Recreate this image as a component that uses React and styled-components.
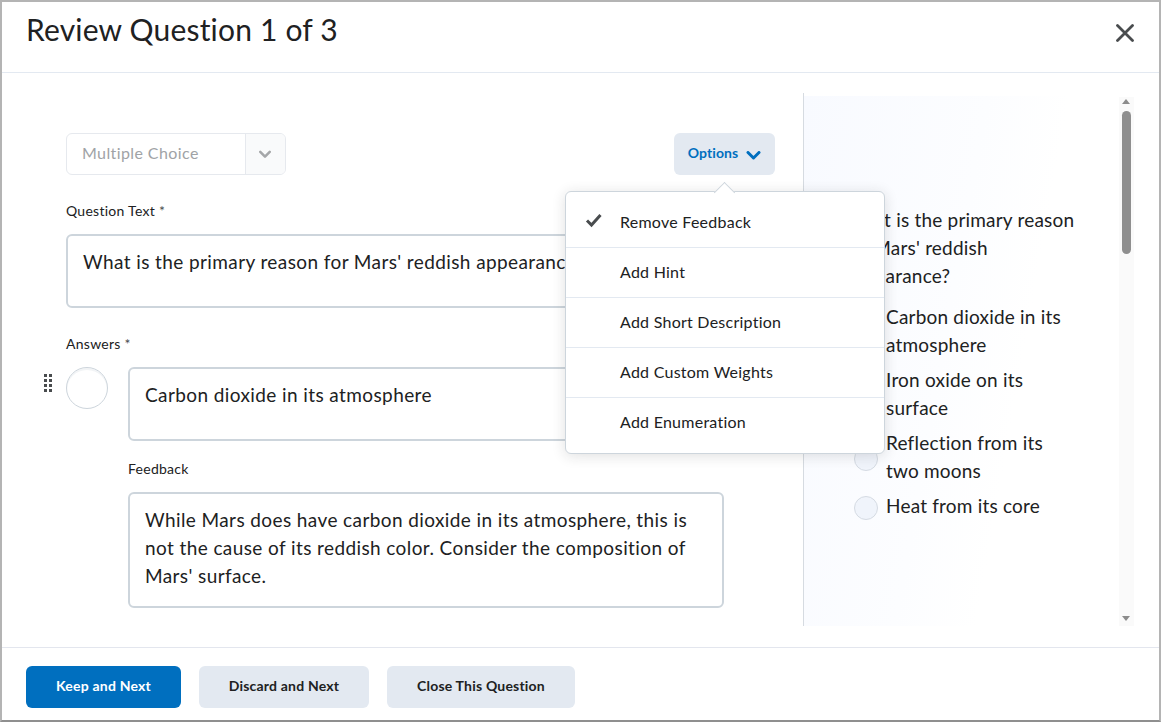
import React from 'react'
import styled, { createGlobalStyle } from 'styled-components'

const GlobalStyle = createGlobalStyle`
  html, body { margin: 0; padding: 0; height: 100%; }
  body { font-family: Lato, "Liberation Sans", sans-serif; color: #202122; background: #fff; }
  * { box-sizing: border-box; }
`

const Dialog = styled.div`
  width: 1161px;
  height: 722px;
  display: flex;
  flex-direction: column;
  background: #fff;
  border: 2px solid #b4b4b4;
  border-bottom-color: #8f8f8f;
  overflow: hidden;
`

const Header = styled.header`
  height: 71px;
  flex: none;
  display: flex;
  align-items: flex-start;
  justify-content: space-between;
  padding: 7px 24px 0;
  border-bottom: 1px solid #e3e9f1;
`

const Title = styled.h1`
  margin: 0;
  font-size: 30px;
  line-height: 40px;
  font-weight: 400;
  letter-spacing: 0.18px;
`

const CloseButton = styled.button`
  width: 18px;
  height: 18px;
  margin: 15px 1px 0 0;
  padding: 0;
  border: 0;
  background: none;
  color: #494c4e;
  display: flex;
`

const Body = styled.main`
  flex: 1;
  min-height: 0;
  display: flex;
  overflow: hidden;
`

const Form = styled.section`
  width: 801px;
  flex: none;
  padding: 60px 0 0 42px;
`

const TopRow = styled.div`
  width: 709px;
  margin-left: 22px;
  margin-bottom: 26px;
  display: flex;
  justify-content: space-between;
`

const SelectBox = styled.div`
  width: 220px;
  height: 42px;
  display: flex;
  border: 1px solid #e6e9ee;
  border-radius: 6px;
  overflow: hidden;
`

const SelectText = styled.div`
  flex: 1;
  padding-left: 15px;
  font-size: 16px;
  line-height: 38px;
  letter-spacing: 0.4px;
  color: #a0a3a6;
`

const SelectArrow = styled.div`
  width: 40px;
  display: flex;
  align-items: center;
  justify-content: center;
  padding-right: 2px;
  background: #f9fafb;
  border-left: 1px solid #e6e9ee;
  color: #a5a7a9;
`

const OptionsButton = styled.button`
  width: 101px;
  height: 42px;
  display: flex;
  align-items: center;
  justify-content: center;
  gap: 8px;
  padding: 0 0 3px;
  border: 0;
  border-radius: 6px;
  background: #e3e9f1;
  color: #006fbf;
  font: 700 14px Lato, sans-serif;
  letter-spacing: 0.1px;

  svg { margin-top: 5px; }
`

const OptionsWrap = styled.div`
  position: relative;
`

const Menu = styled.div`
  position: absolute;
  z-index: 5;
  top: 58px;
  left: -109px;
  width: 320px;
  padding-bottom: 6px;
  background: #fff;
  border: 1px solid #cdd5dc;
  border-radius: 6px;
  box-shadow: 0 2px 14px rgba(32, 33, 34, 0.14);

  &::before {
    content: '';
    position: absolute;
    top: -7px;
    left: 151px;
    width: 14px;
    height: 14px;
    background: #fff;
    border-top: 1px solid #cdd5dc;
    border-left: 1px solid #cdd5dc;
    transform: rotate(45deg);
  }
`

const MenuItem = styled.div`
  position: relative;
  height: 50px;
  display: flex;
  align-items: center;
  padding: 0 0 2px 54px;
  font-size: 16px;
  letter-spacing: 0.25px;
  border-top: ${(p) => (p.$first ? '0' : '1px solid #e3e9f1')};
  margin-top: ${(p) => (p.$first ? '5px' : '0')};
`

const Check = styled.span`
  position: absolute;
  left: 19px;
  top: 15px;
  display: flex;
  color: #494c4e;
`

const Label = styled.div`
  height: 20px;
  margin-left: ${(p) => p.$indent || 22}px;
  margin-bottom: 13px;
  font-size: 14px;
  line-height: 20px;
  letter-spacing: 0.27px;
`

const Star = styled.span`
  color: #494c4e;
`

const TextBox = styled.div`
  width: ${(p) => p.$width || 596}px;
  height: ${(p) => p.$height || 74}px;
  margin-left: ${(p) => p.$indent || 0}px;
  padding: 12px 15px;
  border: 2px solid #cdd5dc;
  border-radius: 6px;
  font-size: 19px;
  line-height: 28px;
  letter-spacing: 0.4px;
  flex: none;
`

const QuestionBox = styled(TextBox)`
  margin-bottom: 26px;
  white-space: nowrap;
  overflow: hidden;
`

const AnswerRow = styled.div`
  display: grid;
  grid-template-columns: 8px 42px 596px;
  column-gap: 14px;
  margin-bottom: 18px;
`

const Handle = styled.svg`
  margin-top: 7px;
  color: #494c4e;
`

const Radio = styled.span`
  width: 42px;
  height: 42px;
  border-radius: 50%;
  border: 1px solid #cdd5dc;
  background: #fff;
  box-shadow: inset 0 2px 0 rgba(205, 213, 220, 0.25);
`

const AnswerInput = styled(TextBox)`
  margin-left: 6px;
`

const Preview = styled.aside`
  width: 316px;
  height: 533px;
  margin-top: 20px;
  flex: none;
  border-left: 1px solid #d6dbe1;
  padding-top: 3px;
`

const PreviewFill = styled.div`
  height: 100%;
  padding: 110px 0 0 40px;
  background: linear-gradient(100deg, #f8faff 0%, #fcfdff 45%, #fff 65%);
`

const PreviewInner = styled.div`
  width: 240px;
  font-size: 19px;
  line-height: 28px;
  letter-spacing: 0.2px;
`

const PreviewQuestion = styled.p`
  margin: 0 0 13px;
`

const Choice = styled.div`
  display: flex;
  align-items: center;
  gap: 8px;
  margin: 0 0 7px 10px;
  padding-right: 12px;
`

const ChoiceDot = styled.span`
  width: 24px;
  height: 24px;
  margin-top: 4px;
  flex: none;
  border-radius: 50%;
  border: 1px solid #d5dbe3;
  background: #f0f4fb;
`

const Scrollbar = styled.div`
  position: relative;
  width: 15px;
  height: 529px;
  margin-top: 24px;
  flex: none;
  background: #fafafa;
`

const ScrollArrow = styled.span`
  position: absolute;
  left: 3px;
  ${(p) => (p.$down ? 'bottom: 5px;' : 'top: 2px;')}
  border-left: 4.5px solid transparent;
  border-right: 4.5px solid transparent;
  ${(p) => (p.$down ? 'border-top: 5px solid #8c8c8c;' : 'border-bottom: 5px solid #8c8c8c;')}
`

const ScrollThumb = styled.span`
  position: absolute;
  left: 3px;
  top: 14px;
  width: 9px;
  height: 143px;
  border-radius: 5px;
  background: #8f8f8f;
`

const Footer = styled.footer`
  height: 73px;
  flex: none;
  display: flex;
  gap: 18px;
  padding: 18px 24px 0;
  border-top: 1px solid #e3e6ee;
`

const ActionButton = styled.button`
  width: ${(p) => p.$width}px;
  height: 42px;
  padding: 0 0 3px;
  border: 0;
  border-radius: 6px;
  font: 700 14px Lato, sans-serif;
  letter-spacing: 0.2px;
  background: ${(p) => (p.$primary ? '#006fbf' : '#e3e9f1')};
  color: ${(p) => (p.$primary ? '#fff' : '#202122')};
`

const menuItems = ['Add Hint', 'Add Short Description', 'Add Custom Weights', 'Add Enumeration']

const choices = [
  'Carbon dioxide in its atmosphere',
  'Iron oxide on its surface',
  'Reflection from its two moons',
  'Heat from its core',
]

const Chevron = ({ width = 14, strokeWidth = 3 }) => (
  <svg width={width} height="9" viewBox="0 0 14 9" fill="none" stroke="currentColor" strokeWidth={strokeWidth}>
    <path d="M1.5 1.5L7 7l5.500-5.500" strokeLinecap="round" strokeLinejoin="round" />
  </svg>
)

export default function App() {
  return (
    <>
      <GlobalStyle />
      <Dialog>
        <Header>
          <Title>Review Question 1 of 3</Title>
          <CloseButton aria-label="Close">
            <svg width="18" height="18" viewBox="0 0 18 18" fill="none" stroke="currentColor" strokeWidth="2.8">
              <path d="M1.500 1.500l15 15M16.500 1.500l-15 15" strokeLinecap="round" />
            </svg>
          </CloseButton>
        </Header>
        <Body>
          <Form>
            <TopRow>
              <SelectBox>
                <SelectText>Multiple Choice</SelectText>
                <SelectArrow>
                  <Chevron width={12} />
                </SelectArrow>
              </SelectBox>
              <OptionsWrap>
                <OptionsButton>
                  Options
                  <Chevron width={15} />
                </OptionsButton>
                <Menu>
                  <MenuItem $first>
                    <Check>
                      <svg width="18" height="16" viewBox="0 0 18 16" fill="none" stroke="currentColor" strokeWidth="3">
                        <path d="M2 8.500l4.500 4.500L15.500 3" />
                      </svg>
                    </Check>
                    Remove Feedback
                  </MenuItem>
                  {menuItems.map((item) => (
                    <MenuItem key={item}>{item}</MenuItem>
                  ))}
                </Menu>
              </OptionsWrap>
            </TopRow>
            <Label>
              Question Text <Star>*</Star>
            </Label>
            <QuestionBox $width={658} $indent={22}>
              What is the primary reason for Mars' reddish appearance?
            </QuestionBox>
            <Label>
              Answers <Star>*</Star>
            </Label>
            <AnswerRow>
              <Handle width="8" height="18" viewBox="0 0 8 18" fill="currentColor">
                {[0, 5, 10, 15].map((y) => (
                  <React.Fragment key={y}>
                    <rect x="0" y={y} width="3" height="3" />
                    <rect x="5" y={y} width="3" height="3" />
                  </React.Fragment>
                ))}
              </Handle>
              <Radio />
              <AnswerInput>Carbon dioxide in its atmosphere</AnswerInput>
            </AnswerRow>
            <Label $indent={84}>Feedback</Label>
            <TextBox $height={116} $indent={84}>
              While Mars does have carbon dioxide in its atmosphere, this is not the cause of its reddish color. Consider the composition of Mars' surface.
            </TextBox>
          </Form>
          <Preview>
            <PreviewFill>
              <PreviewInner>
                <PreviewQuestion>What is the primary reason for Mars' reddish appearance?</PreviewQuestion>
                {choices.map((choice) => (
                  <Choice key={choice}>
                    <ChoiceDot />
                    <span>{choice}</span>
                  </Choice>
                ))}
              </PreviewInner>
            </PreviewFill>
          </Preview>
          <Scrollbar>
            <ScrollArrow />
            <ScrollThumb />
            <ScrollArrow $down />
          </Scrollbar>
        </Body>
        <Footer>
          <ActionButton $primary $width={155}>Keep and Next</ActionButton>
          <ActionButton $width={170}>Discard and Next</ActionButton>
          <ActionButton $width={188}>Close This Question</ActionButton>
        </Footer>
      </Dialog>
    </>
  )
}
